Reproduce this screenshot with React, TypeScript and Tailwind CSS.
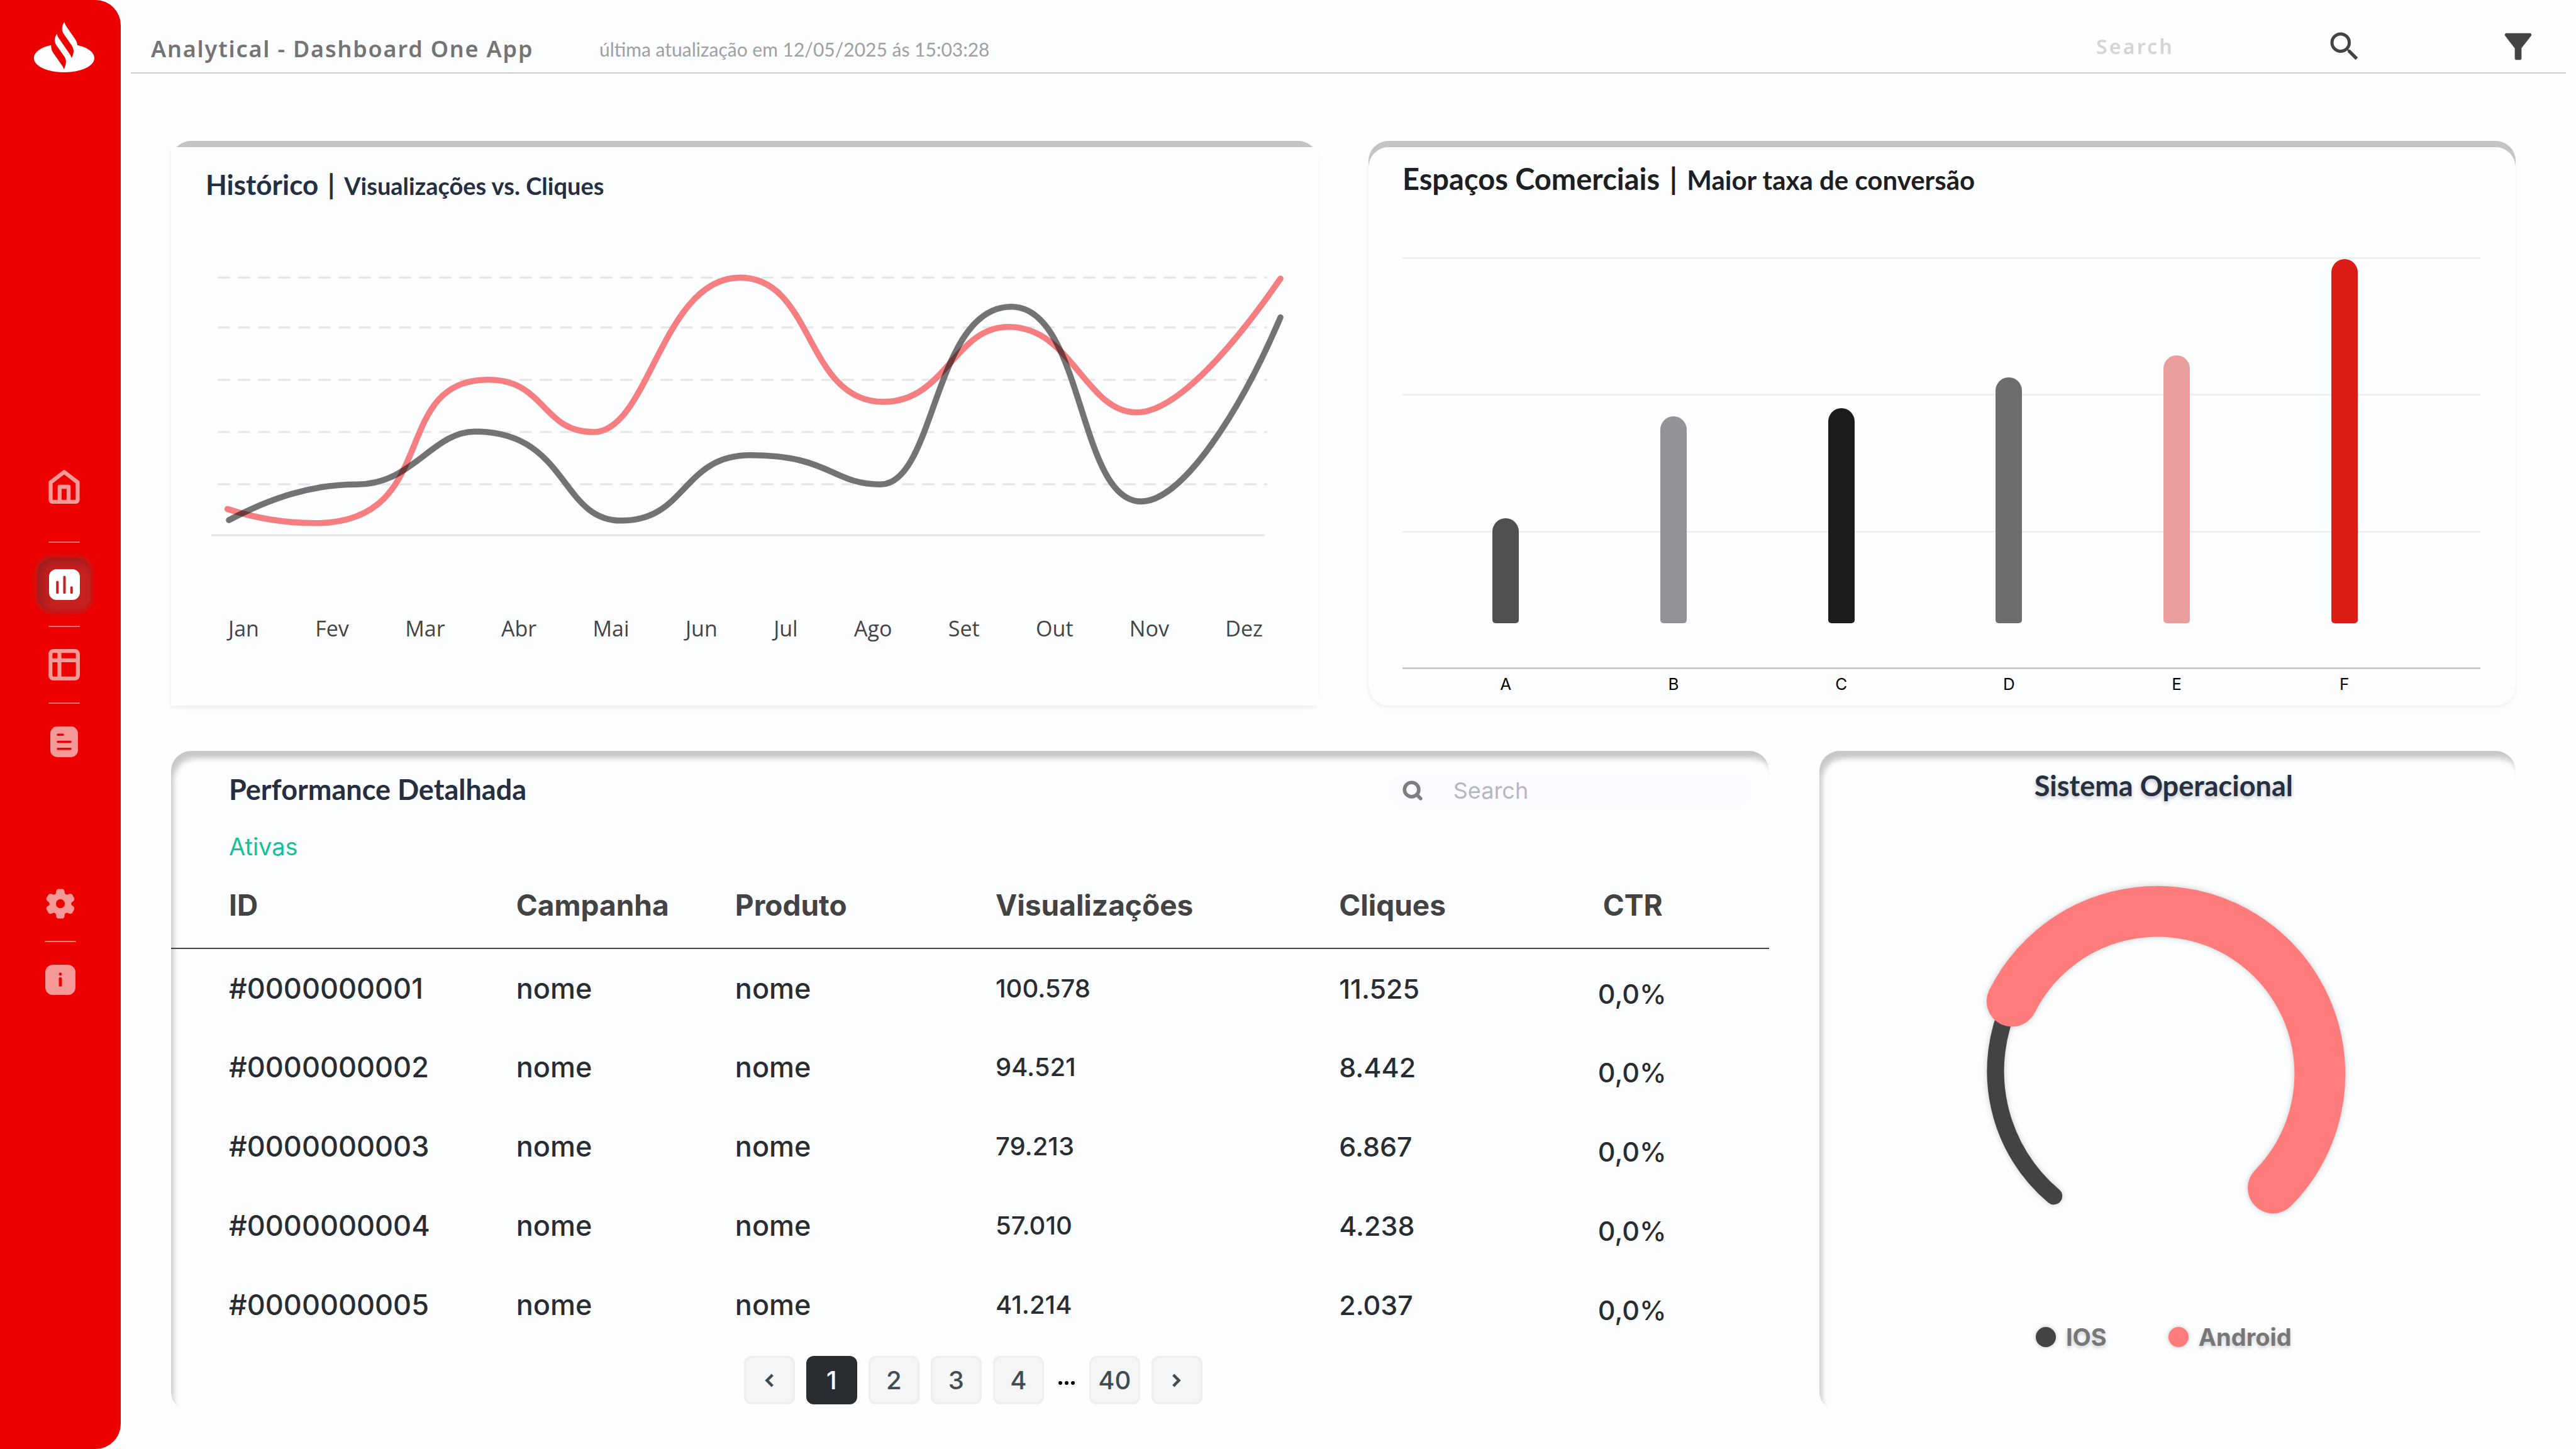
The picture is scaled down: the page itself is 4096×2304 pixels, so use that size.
import React from "react";
import { MdFilterAlt, MdSearch } from "react-icons/md";
import { Search } from "lucide-react";

const months = ["Jan", "Fev", "Mar", "Abr", "Mai", "Jun", "Jul", "Ago", "Set", "Out", "Nov", "Dez"];

const bars = [
  { label: "A", height: 167, color: "bg-[#505050]" },
  { label: "B", height: 329, color: "bg-[#939296]" },
  { label: "C", height: 342, color: "bg-[#1c1c1c]" },
  { label: "D", height: 391, color: "bg-[#6d6d6d]" },
  { label: "E", height: 426, color: "bg-[#e99d9d]" },
  { label: "F", height: 579, color: "bg-[#db1d16]" },
];

const rows = [
  { id: "#0000000001", views: "100.578", clicks: "11.525" },
  { id: "#0000000002", views: "94.521", clicks: "8.442" },
  { id: "#0000000003", views: "79.213", clicks: "6.867" },
  { id: "#0000000004", views: "57.010", clicks: "4.238" },
  { id: "#0000000005", views: "41.214", clicks: "2.037" },
];

function Logo() {
  return (
    <svg viewBox="0 0 120 100" className="h-20 w-24" role="img" aria-label="Santander">
      <path
        fill="#fff"
        d="M34 46C34 53 35.500 57 38 61L55.500 86C57.500 88.500 58.500 91 59.500 94C63 88 64.500 80 63 74.500C62.500 72 61 69.500 60 68L45.500 47.500C40.500 40 39.500 33 45.500 23.300C46.300 26.500 47 28.500 49 31.500L71.500 64.500C73 67 74 69 74.500 71.500C78.500 65 80 58 77.500 51.500C77 50 76 48 75 46.500L60 25C54.500 17.500 54.500 8.500 60.500 0C61.500 3.500 62.500 5.500 64 8L82.500 35C84.500 38 86 41.500 86 46C106 50 120 60 120 72C120 88 93 100 60 100C27 100 0 88 0 72C0 60 14 50 34 46Z"
      />
    </svg>
  );
}

function HomeIcon() {
  return (
    <svg viewBox="0 0 62 68" className="h-[54px] w-[50px]" fill="none" stroke="#f59898" strokeWidth="8" strokeLinejoin="round">
      <path d="M31 4.500L58 25V60a4 4 0 0 1-4 4H8a4 4 0 0 1-4-4V25Z" />
      <path d="M22 64V34H40V64" />
    </svg>
  );
}

function ChartIcon() {
  return (
    <svg viewBox="0 0 61 61" className="size-[49px]">
      <rect width="61" height="61" rx="15" fill="#fff" />
      <rect x="14" y="23" width="5" height="26" rx="2.500" fill="#c62020" />
      <rect x="28" y="13" width="5" height="36" rx="2.500" fill="#c62020" />
      <rect x="42" y="34" width="5" height="15" rx="2.500" fill="#c62020" />
    </svg>
  );
}

function TableIcon() {
  return (
    <svg viewBox="0 0 63 63" className="size-[50px]" fill="none" stroke="#f59898" strokeWidth="8">
      <rect x="4" y="4" width="55" height="55" rx="6" />
      <path d="M22 4V59M4 22.500H59" />
    </svg>
  );
}

function DocIcon() {
  return (
    <svg viewBox="0 0 55 61" className="h-[49px] w-11">
      <rect width="55" height="61" rx="14" fill="#f59898" />
      <path d="M15 16.500H25M15 30.500H40M15 44.500H40" stroke="#ec0000" strokeWidth="4.500" strokeLinecap="round" />
    </svg>
  );
}

function GearIcon() {
  return (
    <svg viewBox="0 0 60 60" className="size-12">
      <circle cx="30" cy="30" r="21.500" fill="#f59898" />
      {[0, 60, 120, 180, 240, 300].map((a) => (
        <path
          key={a}
          fill="#f59898"
          transform={`rotate(${a} 30 30)`}
          d="M19 12C21 10.500 21.500 9 21.500 7C21.500 2.500 24 .500 27 .500H33C36 .500 38.500 2.500 38.500 7C38.500 9 39 10.500 41 12L36 22H24Z"
        />
      ))}
      <circle cx="30" cy="30" r="9" fill="#ec0000" />
    </svg>
  );
}

function InfoIcon() {
  return (
    <svg viewBox="0 0 60 60" className="size-12">
      <rect width="60" height="60" rx="15" fill="#f59898" />
      <circle cx="30" cy="18.500" r="3" fill="#ec0000" />
      <rect x="27" y="25" width="6" height="18.500" rx="2" fill="#ec0000" />
    </svg>
  );
}

function Divider() {
  return <hr className="h-[2px] w-[50px] rounded-full border-0 bg-[#f67c7c]" />;
}

function Sidebar() {
  return (
    <aside className="flex w-48 shrink-0 flex-col items-center rounded-r-[40px] bg-[#ec0000] pt-[35px]">
      <a href="#inicio" className="pl-3" aria-label="Santander">
        <Logo />
      </a>
      <nav className="mt-[632px] flex flex-col items-center" aria-label="Principal">
        <div className="flex flex-col items-center pl-3">
          <a href="#home" aria-label="Início" className="mb-[60px]">
            <HomeIcon />
          </a>
          <Divider />
          <a
            href="#dashboard"
            aria-label="Dashboard"
            aria-current="page"
            className="my-[18px] flex size-24 items-center justify-center rounded-[28px] border-[6px] border-[#d21010] bg-[#c62020] shadow-[inset_6px_6px_14px_#991d1d]"
          >
            <ChartIcon />
          </a>
          <Divider />
          <a href="#tabelas" aria-label="Tabelas" className="my-[35px]">
            <TableIcon />
          </a>
          <Divider />
          <a href="#relatorios" aria-label="Relatórios" className="mt-9">
            <DocIcon />
          </a>
        </div>
        <div className="mt-[209px] flex flex-col items-center">
          <a href="#configuracoes" aria-label="Configurações" className="mb-[35px]">
            <GearIcon />
          </a>
          <Divider />
          <a href="#info" aria-label="Informações" className="mt-9">
            <InfoIcon />
          </a>
        </div>
      </nav>
    </aside>
  );
}

function Header() {
  return (
    <header className="mx-4 flex h-[117px] items-center border-b-2 border-[#c8ccdb] pl-8 pr-11 pt-10">
      <h1 className="w-[713px] font-['Noto_Sans'] text-[36px] leading-[48px] font-semibold tracking-wider text-[#747475]">
        Analytical - Dashboard One App
      </h1>
      <p className="flex-1 font-[Lato] text-[30px] leading-[48px] text-[#a0a0a1]">
        última atualização em 12/05/2025 ás 15:03:28
      </p>
      <form className="flex items-center pb-2" role="search">
        <input
          type="search"
          aria-label="Search"
          placeholder="Search"
          className="mr-5 w-[345px] bg-transparent font-['Noto_Sans'] text-[32px] leading-[48px] font-semibold tracking-widest outline-none placeholder:text-[#d3d4d6]"
        />
        <button type="submit" aria-label="Buscar" className="text-[#434343]">
          <MdSearch size={60} />
        </button>
      </form>
      <button type="button" aria-label="Filtrar" className="mb-2 ml-[214px] text-[#434343]">
        <MdFilterAlt size={64} />
      </button>
    </header>
  );
}

function HistoryCard() {
  return (
    <section className="rounded-[32px] pt-[10px] shadow-[inset_0_16px_4px_#c4c4c4,0_4px_8px_rgba(0,0,0,0.03)]">
      <div className="bg-[#fcfdff] pt-[31px] pr-[52px] pb-[99px] pl-[55px] shadow-[-2px_4px_4px_rgba(0,0,0,0.04)]">
        <h2 className="font-[Lato] text-[44px] leading-[56px] font-bold text-[#252f40]">
          Histórico <span className="mx-1">|</span> <span className="text-[38px]">Visualizações vs. Cliques</span>
        </h2>
        <div className="pl-[5px]">
          <svg viewBox="415 540 2140 535" className="mt-[108px] w-full overflow-visible" role="img" aria-label="Visualizações e cliques por mês">
            <g stroke="#e5e6e9" strokeWidth="4">
              {[553, 652, 756, 860, 964].map((y) => (
                <path key={y} d={`M433 ${y}H2519`} strokeDasharray="24 16" />
              ))}
              <path d="M420 1065H2514" />
            </g>
            <g fill="none" strokeWidth="12" strokeLinecap="round" className="isolate">
              <path
                stroke="#f57f80"
                d="M452 1013C510 1032 565 1041 626 1041C880 1041 770 756 970 756C1085 756 1076 860 1180 860C1290 860 1315 553 1471 553C1618 553 1600 800 1756 800C1880 800 1896 651 2005 651C2130 651 2158 821 2259 821C2340 821 2455 685 2545 555"
              />
              <path
                className="mix-blend-multiply"
                stroke="#737374"
                d="M455 1035C540 990 620 964 710 964C820 964 860 859 944 859C1130 859 1112 1036 1235 1036C1365 1036 1356 906 1491 906C1650 906 1654 964 1750 964C1860 964 1855 611 2010 611C2155 611 2142 998 2268 998C2350 998 2465 820 2545 632"
              />
            </g>
          </svg>
        </div>
        <ul className="mt-[116px] mr-9 ml-9 flex justify-between font-['Open_Sans'] text-[34px] leading-[48px] text-[#444445]">
          {months.map((m) => (
            <li key={m}>{m}</li>
          ))}
        </ul>
      </div>
    </section>
  );
}

function SpacesCard() {
  return (
    <section className="rounded-[32px] pt-[10px] shadow-[inset_0_24px_6px_#c4c4c4,0_4px_8px_rgba(0,0,0,0.03)]">
      <div className="h-full rounded-[32px] bg-[#fcfdff] pt-[22px] pr-14 pb-[15px] pl-[54px] shadow-[-1px_2px_4px_rgba(0,0,0,0.04)]">
        <h2 className="font-[Lato] text-[47px] leading-[56px] font-bold text-[#1e1f23]">
          Espaços Comerciais <span className="mx-1">|</span> <span className="text-[42px]">Maior taxa de conversão</span>
        </h2>
        <div className="mt-[95px] grid">
          <div className="col-start-1 row-start-1 flex flex-col justify-between">
            <hr className="h-[3px] border-0 bg-[#eeeff1]" />
            <hr className="h-[3px] border-0 bg-[#eeeff1]" />
            <hr className="h-[3px] border-0 bg-[#eeeff1]" />
            <hr className="h-[3px] border-0 bg-[#c9cacd]" />
          </div>
          <div className="col-start-1 row-start-1 grid h-[655px] grid-cols-6 items-end justify-items-center pr-[83px] pb-[73px] pl-[31px]">
            {bars.map((b) => (
              <div key={b.label} className={`w-[42px] rounded-t-[21px] rounded-b-[5px] ${b.color}`} style={{ height: b.height }} />
            ))}
          </div>
        </div>
        <div className="mt-2 grid grid-cols-6 justify-items-center pr-[83px] pl-[31px] font-[Inter] text-[26px] leading-8 text-black">
          {bars.map((b) => (
            <span key={b.label}>{b.label}</span>
          ))}
        </div>
      </div>
    </section>
  );
}

const pageButton =
  "flex h-[77px] w-[81px] items-center justify-center rounded-xl border-[3px] border-[#eeeeee] bg-[#f5f5f5] text-[#404b52]";

function PerformanceCard() {
  return (
    <section className="rounded-[32px] pt-[33px] pb-[12px] shadow-[inset_6px_14px_8px_-2px_#c6c7c9]">
      <div className="flex items-start justify-between pr-8 pl-[92px]">
        <h2 className="font-[Lato] text-[45px] leading-[56px] font-bold text-[#252f40]">Performance Detalhada</h2>
        <label className="mt-1 flex h-[52px] w-[568px] items-center gap-[48px] rounded-[20px] bg-[#fbfbff] pl-4 text-[#7e7e7e]">
          <Search size={40} strokeWidth={4} />
          <input
            type="search"
            aria-label="Search"
            placeholder="Search"
            className="w-full min-w-0 bg-transparent font-[Inter] text-[36px] leading-[48px] outline-none placeholder:text-[#b5b7c0]"
          />
        </label>
      </div>
      <p className="mt-[39px] pl-[92px] font-[Inter] text-[38px] leading-[48px] text-[#16c098]">Ativas</p>
      <table className="w-full table-fixed text-left font-[Inter] text-[45px] leading-[56px]">
        <colgroup>
          <col className="w-[21.6%]" />
          <col className="w-[13.7%]" />
          <col className="w-[16.3%]" />
          <col className="w-[21.5%]" />
          <col className="w-[16.2%]" />
          <col className="w-[10.7%]" />
        </colgroup>
        <thead>
          <tr className="border-b-2 border-[#434548] text-[46px] text-[#434343]">
            <th scope="col" className="pt-[41px] pb-10 pl-[92px] font-bold">ID</th>
            <th scope="col" className="pt-[41px] pb-10 font-bold">Campanha</th>
            <th scope="col" className="pt-[41px] pb-10 font-bold">Produto</th>
            <th scope="col" className="pt-[41px] pb-10 font-bold">Visualizações</th>
            <th scope="col" className="pt-[41px] pb-10 font-bold">Cliques</th>
            <th scope="col" className="pt-[41px] pb-10 pl-2 font-bold">CTR</th>
          </tr>
        </thead>
        <tbody className="font-medium text-[#292d32]">
          {rows.map((r) => (
            <tr key={r.id} className="h-[126px]">
              <td className="pl-[92px]">{r.id}</td>
              <td>nome</td>
              <td>nome</td>
              <td className="text-[40px]">{r.views}</td>
              <td className="text-[43px]">{r.clicks}</td>
              <td className="pt-4 text-[43px]">0,0%</td>
            </tr>
          ))}
        </tbody>
      </table>
      <nav aria-label="Paginação" className="mt-[18px] flex items-center justify-center gap-[18px] pl-[10px] font-[Inter] text-[40px] leading-[48px] font-medium">
        <button type="button" aria-label="Anterior" className={pageButton}>
          <svg viewBox="0 0 18 24" className="h-[22px] w-[16px]" fill="none" stroke="currentColor" strokeWidth="5">
            <path d="M15 2L5 12L15 22" />
          </svg>
        </button>
        <button type="button" aria-current="page" className="flex h-[77px] w-[81px] items-center justify-center rounded-xl bg-[#292d32] text-white">
          1
        </button>
        <button type="button" className={pageButton}>2</button>
        <button type="button" className={pageButton}>3</button>
        <button type="button" className={pageButton}>4</button>
        <span className="flex w-9 justify-center gap-1 pt-2" aria-hidden="true">
          <i className="size-[6px] rounded-full bg-black" />
          <i className="size-[6px] rounded-full bg-black" />
          <i className="size-[6px] rounded-full bg-black" />
        </span>
        <button type="button" className={pageButton}>40</button>
        <button type="button" aria-label="Próxima" className={pageButton}>
          <svg viewBox="0 0 18 24" className="h-[22px] w-[16px]" fill="none" stroke="currentColor" strokeWidth="5">
            <path d="M3 2L13 12L3 22" />
          </svg>
        </button>
      </nav>
    </section>
  );
}

function SystemCard() {
  return (
    <section className="flex flex-col items-center rounded-[32px] pt-[27px] pr-3 shadow-[inset_6px_14px_8px_-2px_#c6c7c9]">
      <h2 className="font-[Lato] text-[45px] leading-[56px] font-bold text-[#252f40] [text-shadow:0_3px_6px_rgba(0,0,0,0.25)]">
        Sistema Operacional
      </h2>
      <svg
        viewBox="3918 1740 760 700"
        className="mt-[112px] w-[608px] overflow-visible drop-shadow-[0_0_5px_rgba(0,0,0,0.2)]"
        fill="none"
        strokeLinecap="round"
        role="img"
        aria-label="IOS e Android"
      >
        <path stroke="#434343" strokeWidth="34" d="M4080 2381A324 324 0 0 1 3995 1995" />
        <path stroke="#ff7c7c" strokeWidth="101" d="M3997 1994A323 323 0 1 1 4516 2365" />
      </svg>
      <ul className="mt-[153px] flex gap-[98px] font-[Inter] text-[38px] leading-[48px] font-bold text-[#777777] [text-shadow:0_3px_6px_rgba(0,0,0,0.2)]">
        <li className="flex items-center gap-4">
          <span className="size-8 rounded-full bg-[#434343] shadow-[0_0_6px_rgba(0,0,0,0.25)]" />
          IOS
        </li>
        <li className="flex items-center gap-4">
          <span className="size-8 rounded-full bg-[#ff7c7c] shadow-[0_0_6px_rgba(0,0,0,0.25)]" />
          Android
        </li>
      </ul>
    </section>
  );
}

export default function App() {
  return (
    <div className="flex min-h-screen bg-[#fcfdff] font-[Inter]">
      <Sidebar />
      <div className="min-w-0 flex-1">
        <Header />
        <main className="flex flex-col gap-[72px] pt-[107px] pr-24 pb-14 pl-20">
          <div className="grid grid-cols-2 gap-20">
            <HistoryCard />
            <SpacesCard />
          </div>
          <div className="grid grid-cols-[2540fr_1107fr] gap-20">
            <PerformanceCard />
            <SystemCard />
          </div>
        </main>
      </div>
    </div>
  );
}
